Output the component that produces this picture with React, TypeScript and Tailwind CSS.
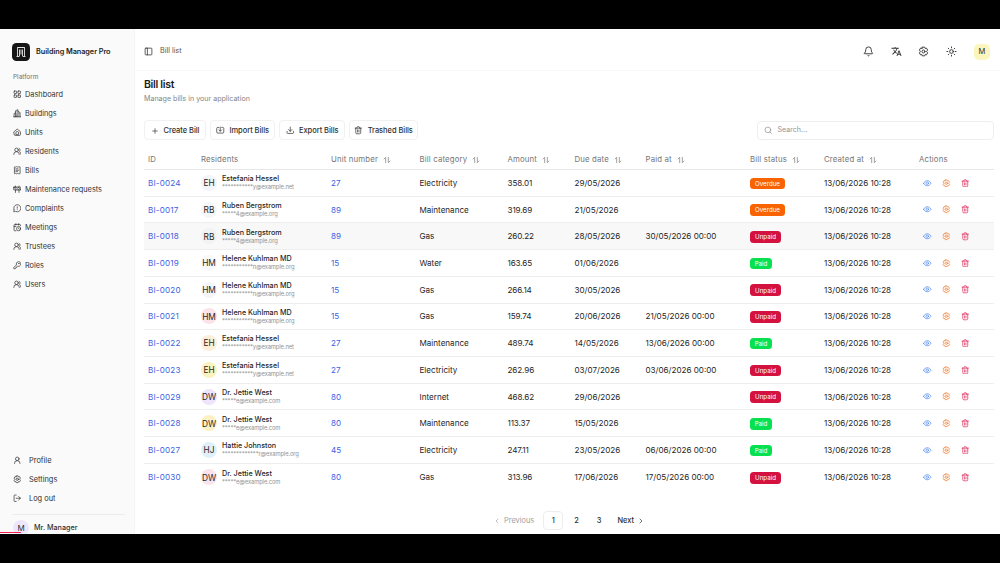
import type { ReactNode } from "react";
import {
  Bell,
  CalendarClock,
  ChevronLeft,
  ChevronRight,
  Construction,
  Download,
  KeyRound,
  LayoutGrid,
  LogOut,
  MessageCircleWarning,
  PanelLeft,
  Plus,
  ReceiptText,
  Search,
  Sun,
  UserRound,
  UsersRound,
} from "lucide-react";
import { MdTranslate } from "react-icons/md";

interface IconProps {
  className?: string;
}

function Svg({ className, children }: IconProps & { children: ReactNode }) {
  return (
    <svg
      viewBox="0 0 24 24"
      fill="none"
      stroke="currentColor"
      strokeWidth="2"
      strokeLinecap="round"
      strokeLinejoin="round"
      className={className}
    >
      {children}
    </svg>
  );
}

const GearIcon = ({ className }: IconProps) => (
  <Svg className={className}>
    <path d="M9.5 2.5h5l1 2.800 3-.6 2.500 4.300-2 2.300v1.400l2 2.300-2.500 4.300-3-.6-1 2.800h-5l-1-2.800-3 .6L3 15l2-2.300v-1.400L3 9l2.500-4.300 3 .6z" />
    <circle cx="12" cy="12" r="3.300" />
  </Svg>
);

const ImportIcon = ({ className }: IconProps) => (
  <Svg className={className}>
    <path d="M8 4H5a3 3 0 0 0-3 3v10a3 3 0 0 0 3 3h14a3 3 0 0 0 3-3V7a3 3 0 0 0-3-3h-3" />
    <path d="M12 3v11M8 11l4 4 4-4" />
  </Svg>
);

const HomeIcon = ({ className }: IconProps) => (
  <Svg className={className}>
    <path d="M3 10.500 12 3l9 7.500V18a3 3 0 0 1-3 3H6a3 3 0 0 1-3-3z" />
    <path d="M8 17v-3a4 4 0 0 1 8 0v3z" />
  </Svg>
);

const BuildingIcon = ({ className }: IconProps) => (
  <Svg className={className}>
    <path d="M7 22V5l7-3v20M14 7l6 3v12M7 11l-4 2v9M2 22h20" />
    <path d="M10.500 8v.1M10.500 12v.1M10.500 16v6M17 13v.1M17 17v.1" />
  </Svg>
);

const TrashIcon = ({ className }: IconProps) => (
  <Svg className={className}>
    <path d="M3 6h18M8.500 6V4a2 2 0 0 1 2-2h3a2 2 0 0 1 2 2v2" />
    <path d="M5 6v13a3 3 0 0 0 3 3h8a3 3 0 0 0 3-3V6M10 11v6M14 11v6" />
  </Svg>
);

const EyeIcon = ({ className }: IconProps) => (
  <Svg className={className}>
    <path d="M1.500 12C4 7.500 7.500 5 12 5s8 2.500 10.500 7c-2.500 4.500-6 7-10.500 7s-8-2.500-10.500-7z" />
    <circle cx="12" cy="12" r="3.500" />
  </Svg>
);

const SortIcon = ({ className }: IconProps) => (
  <Svg className={className}>
    <path d="M8 20V4L3 9M16 4v16l5-5" />
  </Svg>
);

const LogoIcon = () => (
  <svg viewBox="0 0 24 24" fill="none" stroke="#e5e5e5" strokeWidth="1.800" className="size-[12px]">
    <path d="M5 21V3h14v18M3 21h5M16 21h5M9 7v14M12 7v10M15 7v14M5 3h14" />
  </svg>
);

const MENU = [
  { nombre: "Dashboard", icon: LayoutGrid },
  { nombre: "Buildings", icon: BuildingIcon },
  { nombre: "Units", icon: HomeIcon },
  { nombre: "Residents", icon: UsersRound },
  { nombre: "Bills", icon: ReceiptText },
  { nombre: "Maintenance requests", icon: Construction },
  { nombre: "Complaints", icon: MessageCircleWarning },
  { nombre: "Meetings", icon: CalendarClock },
  { nombre: "Trustees", icon: UsersRound },
  { nombre: "Roles", icon: KeyRound },
  { nombre: "Users", icon: UsersRound },
];

const MENU_USER = [
  { nombre: "Profile", icon: UserRound },
  { nombre: "Settings", icon: GearIcon },
  { nombre: "Log out", icon: LogOut },
];

const COLUMNS = [
  { label: "ID", sortable: false },
  { label: "Residents", sortable: false },
  { label: "Unit number", sortable: true },
  { label: "Bill category", sortable: true },
  { label: "Amount", sortable: true },
  { label: "Due date", sortable: true },
  { label: "Paid at", sortable: true },
  { label: "Bill status", sortable: true },
  { label: "Created at", sortable: true },
  { label: "Actions", sortable: false },
];

const GRID =
  "grid grid-cols-[53px_130px_88.500px_88px_67px_71px_104.500px_74px_95px_79px] items-center *:pl-[4px]";

const RESIDENTS = {
  EH: { name: "Estefania Hessel", email: "***********y@example.net" },
  RB: { name: "Ruben Bergstrom", email: "*****4@example.org" },
  HM: { name: "Helene Kuhlman MD", email: "***********n@example.org" },
  DW: { name: "Dr. Jettie West", email: "*****e@example.com" },
  HJ: { name: "Hattie Johnston", email: "*************r@example.org" },
};

type Status = "Overdue" | "Unpaid" | "Paid";

const STATUS_COLORS: Record<Status, string> = {
  Overdue: "bg-[#f96302] w-[35px]",
  Unpaid: "bg-[#d4123f] w-[31px]",
  Paid: "bg-[#08e14f] w-[22px]",
};

interface Bill {
  id: string;
  who: keyof typeof RESIDENTS;
  avatar: string;
  unit: string;
  category: string;
  amount: string;
  due: string;
  paid: string;
  status: Status;
}

const BILLS: Bill[] = [
  { id: "BI-0024", who: "EH", avatar: "bg-[#f3f4f8]", unit: "27", category: "Electricity", amount: "358.01", due: "29/05/2026", paid: "", status: "Overdue" },
  { id: "BI-0017", who: "RB", avatar: "bg-[#f5f6f8]", unit: "89", category: "Maintenance", amount: "319.69", due: "21/05/2026", paid: "", status: "Overdue" },
  { id: "BI-0018", who: "RB", avatar: "bg-[#f1f2f3]", unit: "89", category: "Gas", amount: "260.22", due: "28/05/2026", paid: "30/05/2026 00:00", status: "Unpaid" },
  { id: "BI-0019", who: "HM", avatar: "bg-[#f8f8f9]", unit: "15", category: "Water", amount: "163.65", due: "01/06/2026", paid: "", status: "Paid" },
  { id: "BI-0020", who: "HM", avatar: "bg-[#f4f5f8]", unit: "15", category: "Gas", amount: "266.14", due: "30/05/2026", paid: "", status: "Unpaid" },
  { id: "BI-0021", who: "HM", avatar: "bg-[#fbe3e8]", unit: "15", category: "Gas", amount: "159.74", due: "20/06/2026", paid: "21/05/2026 00:00", status: "Unpaid" },
  { id: "BI-0022", who: "EH", avatar: "bg-[#fdeed8]", unit: "27", category: "Maintenance", amount: "489.74", due: "14/05/2026", paid: "13/06/2026 00:00", status: "Paid" },
  { id: "BI-0023", who: "EH", avatar: "bg-[#fbf3bf]", unit: "27", category: "Electricity", amount: "262.96", due: "03/07/2026", paid: "03/06/2026 00:00", status: "Unpaid" },
  { id: "BI-0029", who: "DW", avatar: "bg-[#eee4fb]", unit: "80", category: "Internet", amount: "468.62", due: "29/06/2026", paid: "", status: "Unpaid" },
  { id: "BI-0028", who: "DW", avatar: "bg-[#fdf1c4]", unit: "80", category: "Maintenance", amount: "113.37", due: "15/05/2026", paid: "", status: "Paid" },
  { id: "BI-0027", who: "HJ", avatar: "bg-[#dff1f8]", unit: "45", category: "Electricity", amount: "247.11", due: "23/05/2026", paid: "06/06/2026 00:00", status: "Paid" },
  { id: "BI-0030", who: "DW", avatar: "bg-[#fae4ec]", unit: "80", category: "Gas", amount: "313.96", due: "17/06/2026", paid: "17/05/2026 00:00", status: "Unpaid" },
];

function ToolbarButton({ width, children }: { width: string; children: ReactNode }) {
  return (
    <button
      className={`flex h-[20px] items-center justify-center gap-[5px] rounded-[4px] border border-[#f1f1f1] pt-[1px] text-[7.5px] font-medium tracking-[-0.05px] whitespace-nowrap ${width}`}
    >
      {children}
    </button>
  );
}

function Sidebar() {
  return (
    <aside className="flex w-[135px] shrink-0 flex-col border-r border-[#f5f5f5] bg-[#fafafa] text-[#303030]">
      <div className="flex h-[46px] items-center gap-[6px] pl-[12px]">
        <span className="flex size-[18px] items-center justify-center rounded-[4.500px] bg-[#151515]">
          <LogoIcon />
        </span>
        <span className="pt-[1px] text-[7.300px] font-semibold tracking-[-0.05px] whitespace-nowrap text-[#1c1c1c]">
          Building Manager Pro
        </span>
      </div>
      <p className="mt-[-2px] h-[12px] pl-[13px] text-[6.400px] leading-[9px] text-[#707070]">
        Platform
      </p>
      <nav>
        {MENU.map(({ nombre, icon: Icon }) => (
          <a key={nombre} className="flex h-[19px] items-center gap-[4px] pl-[12.500px]">
            <Icon className="size-[8.500px]" />
            <span className="text-[7.350px] whitespace-nowrap">{nombre}</span>
          </a>
        ))}
      </nav>
      <div className="mt-auto mb-[6px]">
        {MENU_USER.map(({ nombre, icon: Icon }) => (
          <a key={nombre} className="flex h-[19px] items-center gap-[8px] pl-[12.500px]">
            <Icon className="size-[8.500px]" />
            <span className="text-[7.400px]">{nombre}</span>
          </a>
        ))}
      </div>
      <div className="mr-[9px] ml-[12px] h-[20px] border-t border-[#ececec]">
        <div className="flex items-center gap-[5px] pt-[5px] pl-[1px]">
          <span className="flex size-[16px] items-center justify-center rounded-full bg-[#eee6fb] text-[8px]">
            M
          </span>
          <span className="pt-[1px] text-[7.200px] font-medium">Mr. Manager</span>
        </div>
      </div>
    </aside>
  );
}

function Topbar() {
  return (
    <header className="flex h-[39px] shrink-0 items-center border-b border-[#f8f8f8] pt-[1px] pr-[10px] pl-[9px] text-[#303030]">
      <PanelLeft className="size-[9px]" />
      <span className="ml-[7px] text-[7.200px] text-[#555]">Bill list</span>
      <div className="ml-auto flex items-center gap-[16.500px]">
        <Bell className="size-[11px]" />
        <MdTranslate className="size-[11px]" />
        <GearIcon className="size-[11px]" />
        <Sun className="size-[11px]" />
        <span className="ml-[1px] flex size-[16px] items-center justify-center rounded-[5px] bg-[#fbf5be] text-[7.500px]">
          M
        </span>
      </div>
    </header>
  );
}

function BillRow({ bill, active }: { bill: Bill; active: boolean }) {
  const resident = RESIDENTS[bill.who];
  return (
    <div
      className={`${GRID} h-[26.730px] border-b border-[#eeeeee] text-[8.080px] whitespace-nowrap text-[#1f1f1f] last:border-b-0 ${active ? "bg-[#f8f8f8]" : ""}`}
    >
      <span className="tracking-[0.200px] text-[#3d5fe3]">{bill.id}</span>
      <div className="flex items-center gap-[5px]">
        <span className={`flex size-[16px] items-center justify-center rounded-full pt-[1px] text-[8.300px] ${bill.avatar}`}>
          {bill.who}
        </span>
        <div className="pb-[1.500px]">
          <p className="text-[7.200px] leading-[9px] font-medium">{resident.name}</p>
          <p className="text-[5.800px] leading-[7px] tracking-[-0.100px] text-[#929292]">
            {resident.email}
          </p>
        </div>
      </div>
      <span className="text-[#3d5fe3]">{bill.unit}</span>
      <span>{bill.category}</span>
      <span className="tracking-[-0.100px]">{bill.amount}</span>
      <span>{bill.due}</span>
      <span>{bill.paid}</span>
      <div>
        <span
          className={`mt-[1px] flex h-[11.500px] items-center justify-center rounded-[3.500px] text-[6.200px] text-white ${STATUS_COLORS[bill.status]}`}
        >
          {bill.status}
        </span>
      </div>
      <span>13/06/2026 10:28</span>
      <div className="flex items-center gap-[10.500px]">
        <EyeIcon className="ml-[4px] size-[8.500px] text-[#4d86ee]" />
        <GearIcon className="size-[8.500px] text-[#f07a2c]" />
        <TrashIcon className="size-[8.500px] text-[#df2858]" />
      </div>
    </div>
  );
}

export default function App() {
  return (
    <div className="flex h-[563px] w-[1000px] flex-col overflow-hidden bg-black font-['Inter','Liberation_Sans',sans-serif]">
      <div className="relative mt-[29px] flex h-[505px] overflow-hidden bg-white">
        <Sidebar />
        <main className="flex min-w-0 flex-1 flex-col pt-[3px]">
          <Topbar />
          <section className="flex flex-col pt-[7px] pr-[6px] pl-[9px]">
            <h1 className="text-[10.500px] leading-[13px] font-semibold tracking-[-0.300px] text-[#1c1c1c]">
              Bill list
            </h1>
            <p className="mt-[2px] text-[7.100px] leading-[11px] text-[#858585]">
              Manage bills in your application
            </p>
            <div className="mt-[16px] flex items-center gap-[4px] text-[#303030]">
              <ToolbarButton width="w-[62px]">
                <Plus className="size-[8px]" />
                Create Bill
              </ToolbarButton>
              <ToolbarButton width="w-[65px]">
                <ImportIcon className="size-[8.500px]" />
                Import Bills
              </ToolbarButton>
              <ToolbarButton width="w-[66px]">
                <Download className="size-[8.500px]" />
                Export Bills
              </ToolbarButton>
              <ToolbarButton width="w-[69px]">
                <TrashIcon className="size-[8.500px]" />
                Trashed Bills
              </ToolbarButton>
              <div className="ml-auto flex h-[19px] w-[237px] items-center gap-[5px] rounded-[4px] border border-[#eeeeee] pt-[1px] pl-[6px] text-[7.100px] text-[#929292]">
                <Search className="size-[8.500px]" />
                Search...
              </div>
            </div>
            <div className="mt-[9px]">
              <div className={`${GRID} h-[21px] border-b border-[#e6e6e6] pt-[1px] text-[7.800px] tracking-[0.150px] whitespace-nowrap text-[#767676]`}>
                {COLUMNS.map((col) => (
                  <span key={col.label} className="flex items-center gap-[5px]">
                    {col.label}
                    {col.sortable && <SortIcon className="size-[8px]" />}
                  </span>
                ))}
              </div>
              {BILLS.map((bill) => (
                <BillRow key={bill.id} bill={bill} active={bill.id === "BI-0018"} />
              ))}
            </div>
            <div className="mt-[20.500px] flex h-[19px] items-center justify-center text-[7.400px] font-medium text-[#303030]">
              <span className="flex items-center gap-[3px] font-normal text-[#a0a0a0]">
                <ChevronLeft className="size-[8px]" />
                Previous
              </span>
              <span className="ml-[9px] flex h-[19px] w-[20px] items-center justify-center rounded-[4px] border border-[#ededed]">
                1
              </span>
              <span className="ml-[11px]">2</span>
              <span className="ml-[18px]">3</span>
              <span className="ml-[16px] flex items-center gap-[3px]">
                Next
                <ChevronRight className="size-[8px]" />
              </span>
            </div>
          </section>
        </main>
        <div className="absolute bottom-[1px] left-0 h-[1.500px] w-[21px] bg-[#ef234f]" />
      </div>
    </div>
  );
}
